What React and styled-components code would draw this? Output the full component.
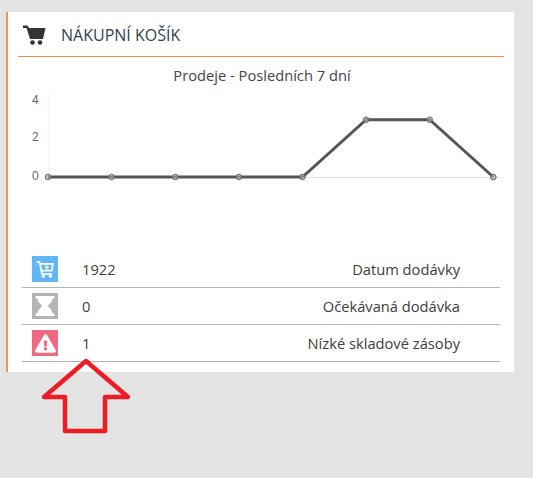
import React from "react";
import styled, { createGlobalStyle } from "styled-components";
import { FaExclamationTriangle } from "react-icons/fa";

const GlobalStyle = createGlobalStyle`
  html, body {
    margin: 0;
    padding: 0;
    background: #e4e4e4;
    font-family: "Open Sans", "Liberation Sans", sans-serif;
    color: #3d3d3d;
  }
`;

const Page = styled.div`
  position: relative;
  height: 478px;
  overflow: hidden;
  padding: 12px 0 0 6px;
  box-sizing: border-box;
`;

const Card = styled.section`
  width: 508px;
  height: 360px;
  box-sizing: border-box;
  background: #fff;
  border-left: 2px solid #f79150;
  padding: 0 10px;
`;

const Header = styled.header`
  display: flex;
  align-items: center;
  gap: 15px;
  height: 43px;
  padding: 1px 0 0 5px;
  border-bottom: 1px solid #f48a45;
`;

const Heading = styled.h2`
  margin: 0;
  font-size: 16px;
  font-weight: 400;
  color: #333f4d;
`;

const ChartTitle = styled.div`
  margin-top: 8px;
  padding-left: 2px;
  text-align: center;
  font-size: 14.7px;
  line-height: 20px;
  color: #444;
`;

const ChartSvg = styled.svg`
  display: block;
  width: 486px;
  height: 161px;
  margin-top: 5px;
`;

const AxisLabel = styled.text`
  font-family: "Liberation Sans", Arial, sans-serif;
  font-size: 12px;
  fill: #666;
`;

const Rows = styled.div`
  margin: 0 4px;
`;

const Row = styled.div`
  display: flex;
  align-items: center;
  height: 36px;
  padding-left: 10px;
  border-bottom: 1px solid #b4b4b4;
  font-size: 14.7px;
`;

const IconBox = styled.span`
  display: flex;
  align-items: center;
  justify-content: center;
  width: 26px;
  height: 26px;
  flex: none;
  color: #fff;
  background: ${(p) => p.$bg};
`;

const Value = styled.span`
  margin-left: 24px;
`;

const Label = styled.span`
  margin-left: auto;
  padding-right: 40px;
`;

const Arrow = styled.svg`
  position: absolute;
  left: 40px;
  top: 358px;
  width: 92px;
  height: 76px;
`;

const CartPlus = () => (
  <svg width="22" height="22" viewBox="0 0 26 26">
    <path d="M3 4.500h3.500L9.500 19H21" fill="none" stroke="#fff" strokeWidth="2" />
    <path d="M7.500 7h15l-1.600 8H9.200" fill="none" stroke="#fff" strokeWidth="2" />
    <path d="M15 8.500v5M12.500 11h5" stroke="#fff" strokeWidth="1.500" />
    <circle cx="11" cy="21.500" r="1.900" fill="#fff" />
    <circle cx="19.500" cy="21.500" r="1.900" fill="#fff" />
  </svg>
);

const Hourglass = () => (
  <svg width="26" height="26" viewBox="0 0 26 26">
    <path d="M3.500 3h19v2.500h-2c0 3.500-3.500 5.500-4.500 7.500 1 2 4.500 4 4.500 7.500h2V23h-19v-2.500h2c0-3.500 3.500-5.500 4.500-7.500-1-2-4.500-4-4.500-7.500h-2z" fill="#fff" />
  </svg>
);

const Warning = () => <FaExclamationTriangle size={21} />;

const xs = [30, 93.6, 157.3, 220.9, 284.5, 348.1, 411.7, 475.3];
const data = [0, 0, 0, 0, 0, 3, 3, 0];
const yOf = (v) => 87 - v * 19.1;

const rows = [
  { color: "#62b5f6", Icon: CartPlus, value: "1922", label: "Datum dodávky" },
  { color: "#b4b4b4", Icon: Hourglass, value: "0", label: "Očekávaná dodávka" },
  { color: "#ef6a80", Icon: Warning, value: "1", label: "Nízké skladové zásoby" },
];

const Chart = () => {
  const points = xs.map((x, i) => `${x},${yOf(data[i])}`).join(" ");
  return (
    <ChartSvg viewBox="0 0 486 161">
      <line x1="31" y1="5" x2="31" y2="87" stroke="#eee" />
      <line x1="30" y1="87.5" x2="482" y2="87.5" stroke="#e2e2e2" />
      <AxisLabel x="14" y="14">4</AxisLabel>
      <AxisLabel x="14" y="51">2</AxisLabel>
      <AxisLabel x="14" y="90">0</AxisLabel>
      <polyline points={points} fill="none" stroke="#555" strokeWidth="3" />
      {xs.map((x, i) => (
        <circle key={x} cx={x} cy={yOf(data[i])} r="2.8" fill="rgba(170,170,170,.65)" stroke="#666" strokeWidth="1" />
      ))}
    </ChartSvg>
  );
};

const App = () => (
  <Page>
    <GlobalStyle />
    <Card>
      <Header>
        <svg width="23" height="20" viewBox="0 0 23 20">
          <path d="M0 0.500h4.500l1.500 2.500h16.500l-2.500 11h-13L3.500 3H0z" fill="#333" />
          <circle cx="9.500" cy="17.500" r="2.300" fill="#333" />
          <circle cx="17" cy="17.500" r="2.300" fill="#333" />
        </svg>
        <Heading>NÁKUPNÍ KOŠÍK</Heading>
      </Header>
      <ChartTitle>Prodeje - Posledních 7 dní</ChartTitle>
      <Chart />
      <Rows>
        {rows.map(({ color, Icon, value, label }) => (
          <Row key={label}>
            <IconBox $bg={color}>
              <Icon />
            </IconBox>
            <Value>{value}</Value>
            <Label>{label}</Label>
          </Row>
        ))}
      </Rows>
    </Card>
    <Arrow viewBox="0 0 92 76">
      <path
        d="M46 3L4 39H25V73H65V39H88Z"
        fill="none"
        stroke="#ed1c24"
        strokeWidth="4.5"
        strokeLinejoin="round"
      />
    </Arrow>
  </Page>
);

export default App;
